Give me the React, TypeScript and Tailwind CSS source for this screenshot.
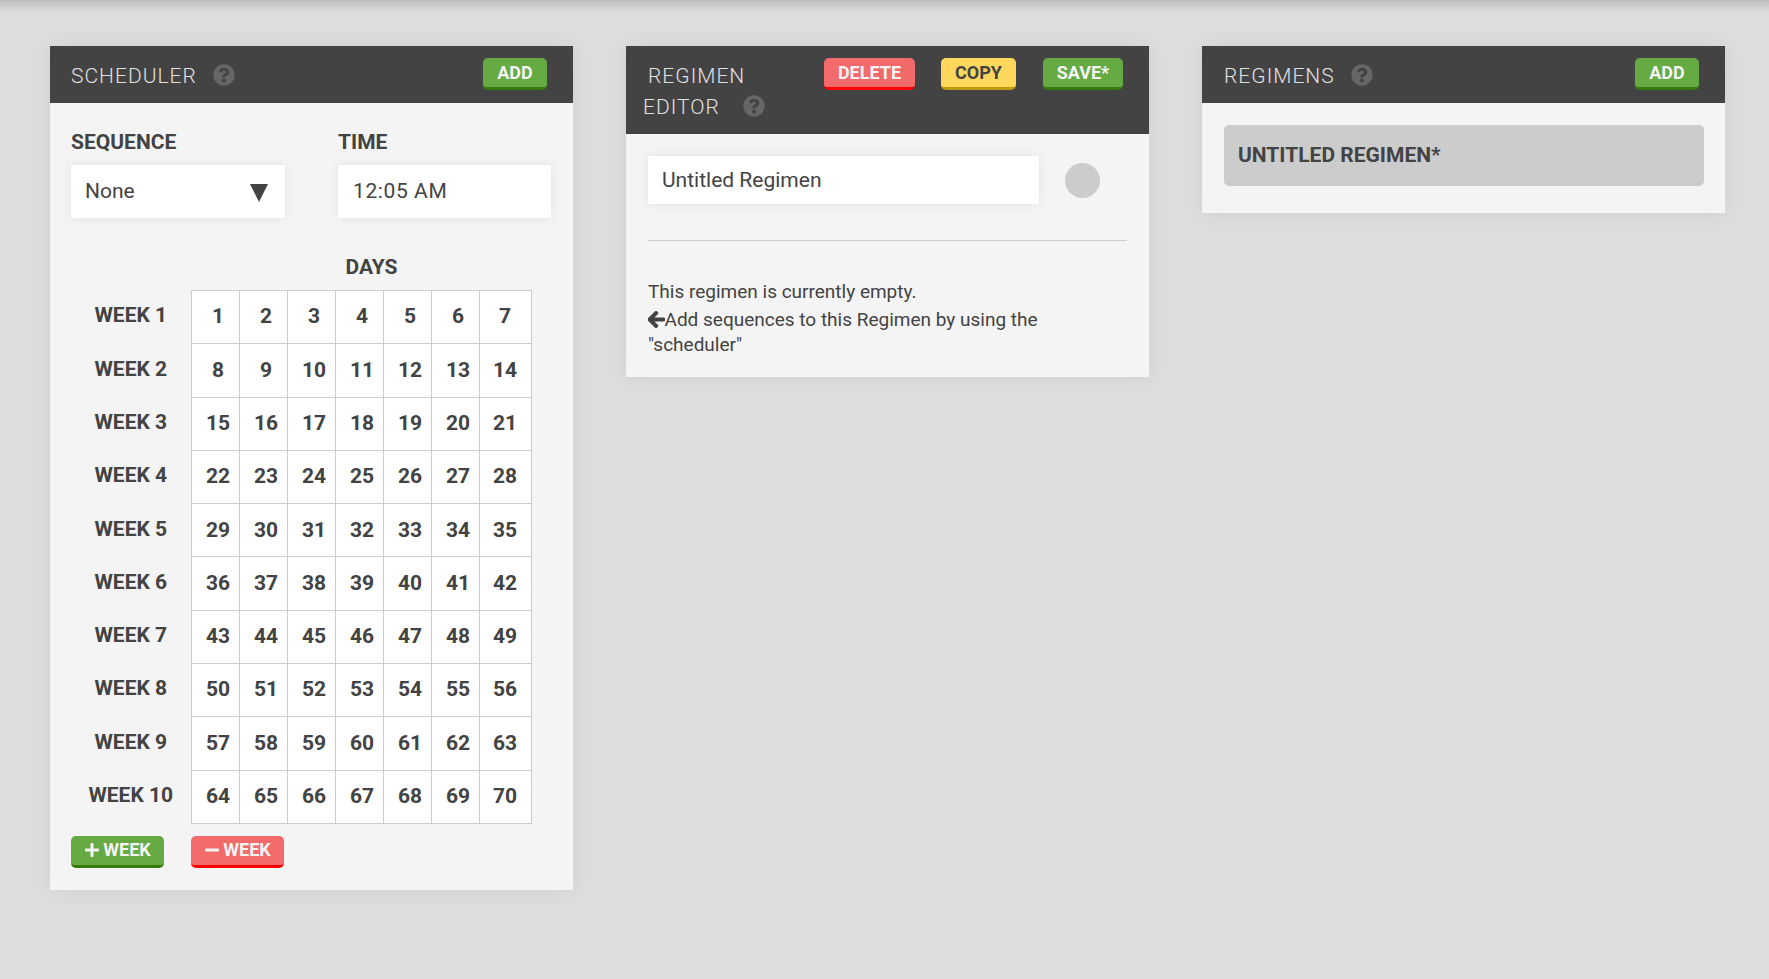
import { FaArrowLeft, FaMinus, FaPlus, FaQuestionCircle } from "react-icons/fa";

const weeks = Array.from({ length: 10 }, (_, w) => ({
  label: `WEEK ${w + 1}`,
  days: Array.from({ length: 7 }, (_, d) => w * 7 + d + 1),
}));

const btnBase =
  "h-[32px] rounded-[5px] border-b-[3px] text-[18px] leading-[27px] font-bold flex items-center justify-center";
const green = `${btnBase} bg-[#66aa44] border-[#367c0b] text-[#f4f4f4]`;
const red = `${btnBase} bg-[#f26a6a] border-[#ff0000] text-[#f4f4f4]`;
const yellow = `${btnBase} bg-[#fdd85d] border-[#bf9a0f] text-[#434343]`;

function Help({ className }: { className?: string }) {
  return <FaQuestionCircle className={`text-[22px] text-[#666666] ${className ?? ""}`} />;
}

function Panel({ header, children, className }: { header: React.ReactNode; children: React.ReactNode; className?: string }) {
  return (
    <div className={`w-[523px] bg-[#f4f4f4] shadow-[0_0_20px_rgba(0,0,0,0.06)] ${className ?? ""}`}>
      <div className="bg-[#434343]">{header}</div>
      {children}
    </div>
  );
}

function SimpleHeader({ title, className }: { title: string; className?: string }) {
  return (
    <div className={`h-[57px] pr-[26px] flex items-center justify-between ${className ?? ""}`}>
      <div className="flex items-center gap-[16px]">
        <span className="text-[21px] tracking-[1px] font-light text-[#e0e0e0] pt-[4px]">{title}</span>
        <Help />
      </div>
      <button className={`${green} w-[64px] -mt-[1px]`}>ADD</button>
    </div>
  );
}

export default function App() {
  return (
    <div
      className="min-h-[979px] bg-[#dddddd] text-[#434343] relative"
      style={{ fontFamily: "Roboto, 'Liberation Sans', sans-serif" }}
    >
      <div className="absolute top-0 inset-x-0 h-[12px] bg-gradient-to-b from-[#bdbdbd] to-[#dddddd]" />
      <div className="flex items-start gap-[53px] pl-[50px] pt-[46px]">
        {/* Scheduler */}
        <Panel header={<SimpleHeader title="SCHEDULER" className="pl-[21px]" />} className="h-[844px]">
          <div className="px-[21px] pt-[27px]">
            <div className="flex gap-[53px]">
              <div className="w-[214px]">
                <label className="block text-[21px] font-bold leading-[24px] mb-[11px]">SEQUENCE</label>
                <div className="h-[53px] bg-white shadow-[0_0_10px_rgba(0,0,0,0.08)] pl-[14px] pr-[17px] flex items-center justify-between text-[21px]">
                  <span>None</span>
                  <svg width="18" height="18" viewBox="0 0 18 18" className="mt-[3px]">
                    <polygon points="0,0 18,0 9,18" fill="#434343" />
                  </svg>
                </div>
              </div>
              <div className="w-[213px]">
                <label className="block text-[21px] font-bold leading-[24px] mb-[11px]">TIME</label>
                <div className="h-[53px] bg-white shadow-[0_0_10px_rgba(0,0,0,0.08)] pl-[15px] flex items-center text-[21px] tracking-[0.6px]">
                  12:05 AM
                </div>
              </div>
            </div>
            <div className="mt-[37px] ml-[130px] w-[341px] text-center text-[21px] font-bold leading-[24px]">DAYS</div>
            <table className="mt-[11px] border-collapse table-fixed w-[460px]">
              <colgroup>
                <col className="w-[120px]" />
                <col className="w-[48px]" />
                <col className="w-[48px]" />
                <col className="w-[48px]" />
                <col className="w-[48px]" />
                <col className="w-[48px]" />
                <col className="w-[48px]" />
                <col className="w-[52px]" />
              </colgroup>
              <tbody>
                {weeks.map((w) => (
                  <tr key={w.label} className="h-[53.3px]">
                    <th className="p-0 pb-[2px] text-[21px] font-bold text-center whitespace-nowrap">{w.label}</th>
                    {w.days.map((d, i) => (
                      <td
                        key={d}
                        className={`p-0 bg-white border border-[#cccccc] text-center text-[21px] font-bold ${i < 6 ? "pl-[6px]" : ""}`}
                      >
                        {d}
                      </td>
                    ))}
                  </tr>
                ))}
              </tbody>
            </table>
            <div className="flex gap-[27px] mt-[12px]">
              <button className={`${green} w-[93px] gap-[3px] pb-[1px]`}>
                <FaPlus className="text-[16px]" />
                WEEK
              </button>
              <button className={`${red} w-[93px] gap-[3px] pb-[1px]`}>
                <FaMinus className="text-[16px]" />
                WEEK
              </button>
            </div>
          </div>
        </Panel>

        {/* Regimen editor */}
        <Panel
          header={
            <div className="h-[88px] pl-[17px] pr-[26px] flex items-start justify-between">
              <div className="w-[130px] pt-[15px] text-[21px] tracking-[1px] font-light text-[#e0e0e0] leading-[31px] indent-[5px]">
                REGIMEN
                <div className="flex items-center gap-[23px] indent-0">
                  <span>EDITOR</span>
                  <Help className="-mt-[4px]" />
                </div>
              </div>
              <div className="flex pt-[12px]">
                <button className={`${red} w-[91px] mr-[26px]`}>DELETE</button>
                <button className={`${yellow} w-[75px] mr-[27px]`}>COPY</button>
                <button className={`${green} w-[80px]`}>SAVE*</button>
              </div>
            </div>
          }
        >
          <div className="px-[22px] pt-[22px] pb-[20px]">
            <div className="flex items-center gap-[26px]">
              <div className="w-[391px] h-[48px] bg-white shadow-[0_0_10px_rgba(0,0,0,0.08)] pl-[14px] flex items-center text-[21px]">
                <span className="pt-[2px]">Untitled Regimen</span>
              </div>
              <div className="w-[35px] h-[35px] rounded-full bg-[#cccccc]" />
            </div>
            <hr className="mt-[36px] border-0 border-t border-[#cccccc]" />
            <p className="mt-[38px] text-[19px] leading-[26px]">This regimen is currently empty.</p>
            <p className="mt-[2px] text-[19px] leading-[25px] w-[400px]">
              <FaArrowLeft className="inline w-[16.5px] h-[19px] align-[-3px]" stroke="currentColor" strokeWidth={30} />
              Add sequences to this Regimen by using the "scheduler"
            </p>
          </div>
        </Panel>

        {/* Regimens */}
        <Panel header={<SimpleHeader title="REGIMENS" className="pl-[22px]" />}>
          <div className="px-[22px] pt-[22px] pb-[27px]">
            <div className="h-[61px] w-[480px] rounded-[5px] bg-[#cccccc] pl-[14px] flex items-center text-[21px] font-bold">
              UNTITLED REGIMEN*
            </div>
          </div>
        </Panel>
      </div>
    </div>
  );
}
